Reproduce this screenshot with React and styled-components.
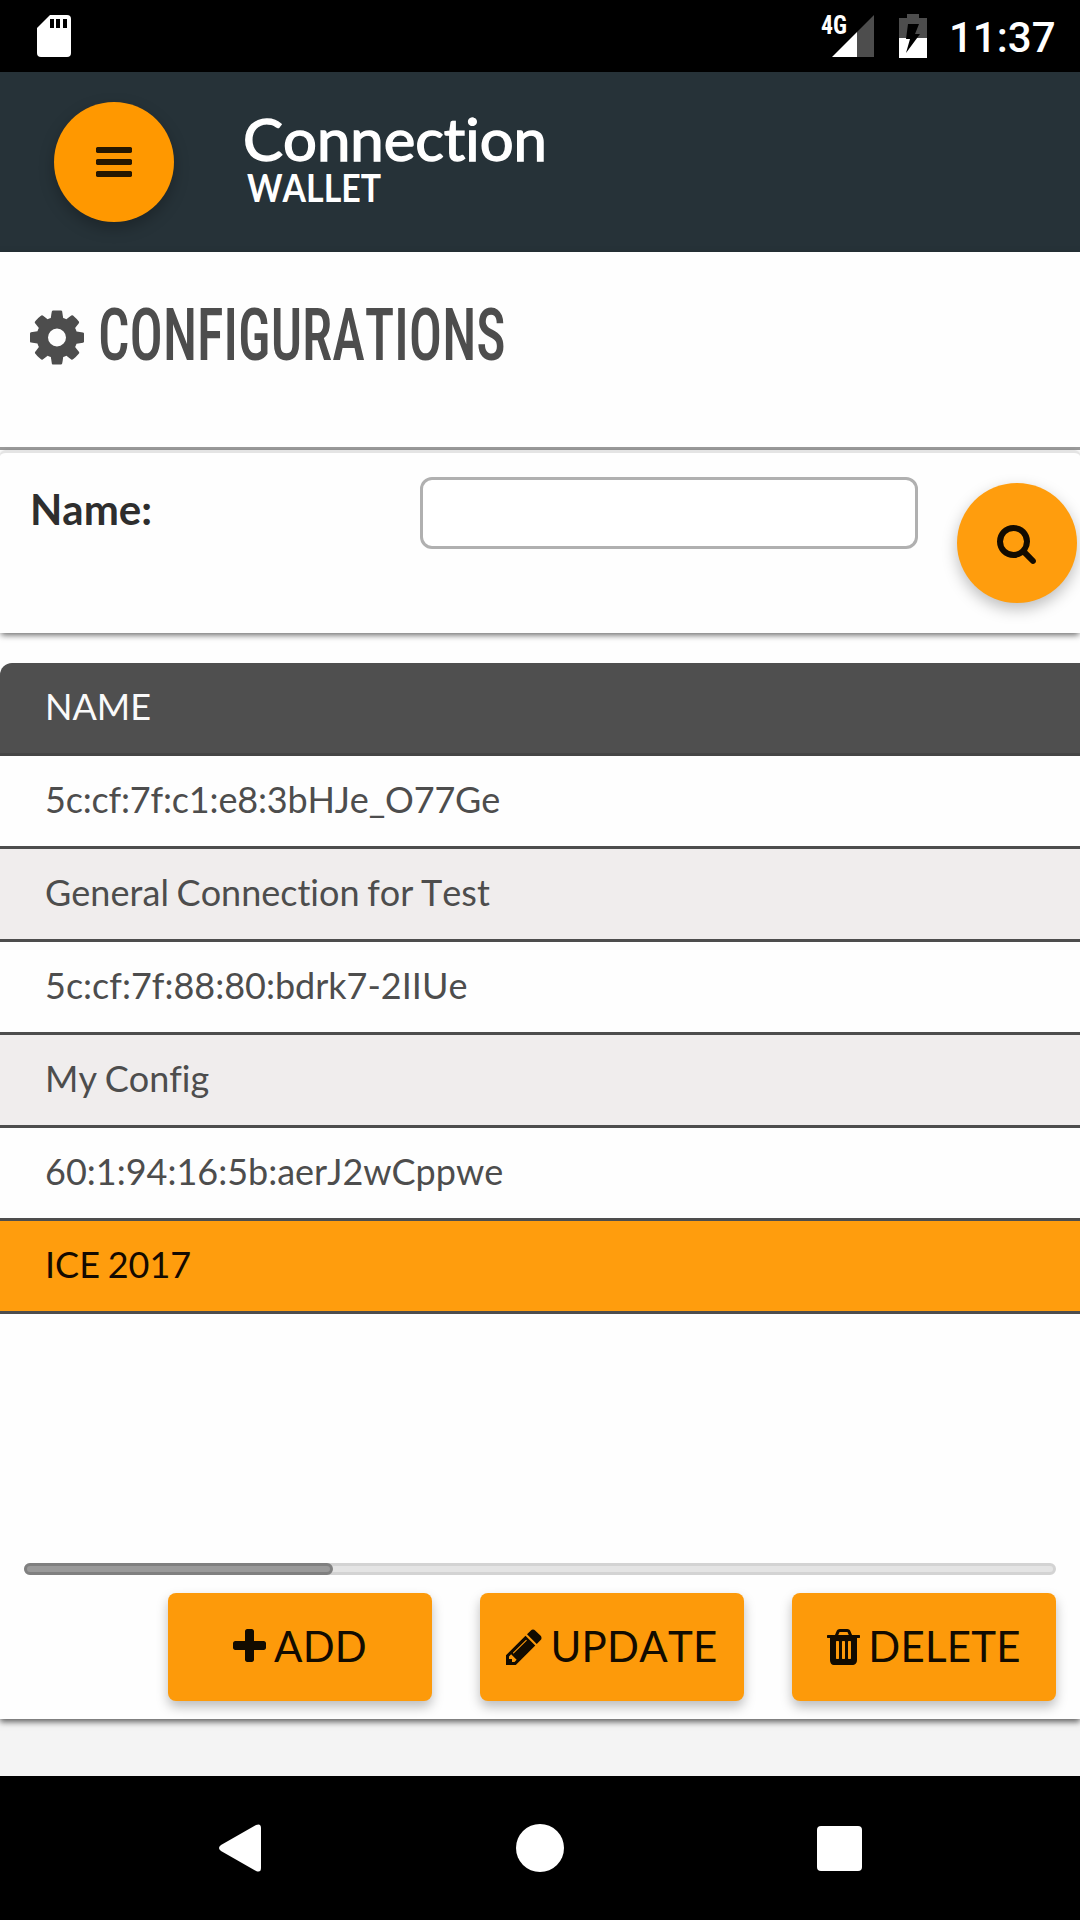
import styled, { createGlobalStyle } from 'styled-components';
import { useState } from 'react';

const GlobalStyle = createGlobalStyle`
    * {
        box-sizing: border-box;
    }

    body {
        margin: 0;
        background: #f4f4f4;
        font-family: Lato, 'Noto Sans', sans-serif;
        font-kerning: none;
        font-variant-ligatures: none;
        color: #4d4d4d;
    }
`

const Screen = styled.div`
    display: flex;
    flex-direction: column;
    width: 1080px;
    height: 1920px;
    overflow: hidden;
`

const StatusBar = styled.div`
    display: flex;
    align-items: center;
    justify-content: space-between;
    height: 72px;
    flex: none;
    padding: 0 25px 0 37px;
    background: #000;
`

const StatusIcons = styled.div`
    display: flex;
    align-items: center;
`

const Network = styled.svg`
    width: 54px;
    height: 44px;
    margin-right: 25px;
    overflow: visible;
    font-family: 'Roboto Condensed', Roboto, sans-serif;
    font-weight: 700;
`

const Clock = styled.div`
    width: 106px;
    margin-left: 22px;
    padding-top: 4px;
    font-family: Roboto, sans-serif;
    font-size: 42px;
    font-weight: 500;
    line-height: 68px;
    text-align: right;
    white-space: nowrap;
    color: #fff;
`

const Header = styled.header`
    display: flex;
    align-items: center;
    height: 180px;
    flex: none;
    padding-left: 54px;
    background: #263238;
`

const RoundButton = styled.button`
    display: flex;
    align-items: center;
    justify-content: center;
    width: 120px;
    height: 120px;
    flex: none;
    padding: 0;
    border: none;
    border-radius: 50%;
    background: ${({ $bright }) => ($bright ? '#ff9800' : '#ff9d0d')};
    color: ${({ $bright }) => ($bright ? '#261700' : '#120b00')};
    box-shadow: 0 6px 15px rgba(0, 0, 0, 0.26);
`

const Logo = styled.svg`
    width: 304px;
    height: 100px;
    margin-left: 70px;
    overflow: visible;
    fill: #fff;
`

const LogoName = styled.text`
    font-size: 59px;
    font-weight: 400;
    stroke: #fff;
    stroke-width: 1.4px;
`

const LogoSub = styled.text`
    font-size: 37.5px;
    font-weight: 700;
`

const Content = styled.main`
    display: flex;
    flex-direction: column;
    height: 1467px;
    flex: none;
    background: #fefefe;
    box-shadow: 0 3px 6px rgba(0, 0, 0, 0.6);
`

const TitleRow = styled.div`
    display: flex;
    align-items: flex-start;
    height: 198px;
    flex: none;
    padding: 48px 0 0 30px;
    border-bottom: 3px solid #9b9b9b;
`

const GearBox = styled.div`
    width: 54px;
    height: 63px;
    margin-top: 6px;
`

const Title = styled.h1`
    margin: 0 0 0 14px;
    font-family: 'Roboto Condensed', Roboto, sans-serif;
    font-size: 72px;
    font-weight: 500;
    line-height: 72px;
    white-space: nowrap;
    transform: scaleX(0.77);
    transform-origin: left center;
`

const SearchPanel = styled.section`
    display: flex;
    align-items: flex-start;
    height: 183px;
    flex: none;
    padding: 0 3px 0 30px;
    border-top: 3px solid #e4e4e4;
    border-radius: 6px 6px 0 0;
    background: #fefefe;
    box-shadow: 0 3px 6px -1px rgba(0, 0, 0, 0.6);
`

const Label = styled.label`
    width: 390px;
    margin-top: 31px;
    font-size: 42px;
    font-weight: 700;
    line-height: 50px;
    color: #2e2e2e;
`

const NameInput = styled.input`
    width: 498px;
    height: 72px;
    margin: 24px 39px 0 0;
    padding: 0 15px;
    border: 3px solid #b0b0b0;
    border-radius: 12px;
    outline: none;
    background: #fff;
    font: inherit;
    font-size: 36px;
`

const SearchButton = styled(RoundButton)`
    margin-top: 30px;
    padding-right: 2px;
`

const Table = styled.div`
    margin-top: 30px;
    border-radius: 12px 0 0 0;
    overflow: hidden;
`

const Row = styled.div`
    height: 93px;
    padding: 21px 45px 0;
    border-bottom: 3px solid #4d4d4d;
    background: ${({ $selected, $even }) => ($selected ? '#ff9d0d' : $even ? '#f0eded' : '#fefefe')};
    color: ${({ $selected }) => ($selected ? '#140a00' : '#4d4d4d')};
    font-size: 36px;
    line-height: 44px;
    letter-spacing: ${({ $tight }) => ($tight ? '-0.17px' : 'normal')};
    word-spacing: -1.5px;
`

const HeadRow = styled(Row)`
    border-bottom-color: #454545;
    background: #4f4f4f;
    color: #fafafa;
`

const Footer = styled.div`
    display: flex;
    flex-direction: column;
    align-items: flex-end;
    margin-top: auto;
    padding: 0 24px 18px;
`

const ScrollTrack = styled.div`
    align-self: stretch;
    height: 12px;
    margin-bottom: 18px;
    border-radius: 6px;
    border: 3px solid #d3d3d3;
    background: #e4e4e4;
`

const ScrollThumb = styled.div`
    width: 309px;
    height: 12px;
    margin: -3px;
    border: 3px solid #808080;
    border-radius: 6px;
    background: #9a9a9a;
`

const Actions = styled.div`
    display: flex;
    gap: 48px;
`

const ActionButton = styled.button`
    display: flex;
    align-items: center;
    justify-content: center;
    gap: 8px;
    width: 264px;
    height: 108px;
    padding: 0;
    border: none;
    border-radius: 8px;
    background: #fd9a0a;
    box-shadow: 0 6px 12px rgba(0, 0, 0, 0.26);
    font-family: inherit;
    font-kerning: none;
    font-size: 42px;
    line-height: 50px;
    letter-spacing: 0.25px;
    color: #120b00;
`

const ActionText = styled.span`
    padding-bottom: 2px;
`

const NavBar = styled.nav`
    display: flex;
    align-items: center;
    justify-content: space-between;
    height: 144px;
    flex: none;
    margin-top: auto;
    padding: 0 218px 0 219px;
    background: #000;
    fill: #fff;
`

// [left edge, width, path] on a 1792 unit grid
const ICONS = {
    bars: [128, 1536, 'M1664 1344v128q0 26-19 45t-45 19h-1408q-26 0-45-19t-19-45v-128q0-26 19-45t45-19h1408q26 0 45 19t19 45zm0-512v128q0 26-19 45t-45 19h-1408q-26 0-45-19t-19-45v-128q0-26 19-45t45-19h1408q26 0 45 19t19 45zm0-512v128q0 26-19 45t-45 19h-1408q-26 0-45-19t-19-45v-128q0-26 19-45t45-19h1408q26 0 45 19t19 45z'],
    cog: [128, 1536, 'M1152 896q0-106-75-181t-181-75-181 75-75 181 75 181 181 75 181-75 75-181zm512-109v222q0 12-8 23t-20 13l-185 28q-19 54-39 91 35 50 107 138 10 12 10 25t-9 23q-27 37-99 108t-94 71q-12 0-26-9l-138-108q-44 23-91 38-16 136-29 186-7 28-36 28h-222q-14 0-24.5-8.5t-11.5-21.5l-28-184q-49-16-90-37l-141 107q-10 9-25 9-14 0-25-11-126-114-165-168-7-10-7-23 0-12 8-23 15-21 51-66.5t54-70.5q-27-50-41-99l-183-27q-13-2-21-12.5t-8-23.5v-222q0-12 8-23t19-13l186-28q14-46 39-92-40-57-107-138-10-12-10-24 0-10 9-23 26-36 98.5-107.5t94.5-71.5q13 0 26 10l138 107q44-23 91-38 16-136 29-186 7-28 36-28h222q14 0 24.5 8.5t11.5 21.5l28 184q49 16 90 37l142-107q9-9 24-9 13 0 25 10 129 119 165 170 7 8 7 22 0 12-8 23-15 21-51 66.5t-54 70.5q26 50 41 98l183 28q13 2 21 12.5t8 23.5z'],
    search: [64, 1664, 'M1216 832q0-185-131.5-316.5t-316.5-131.5-316.5 131.5-131.5 316.5 131.5 316.5 316.5 131.5 316.5-131.5 131.5-316.5zm512 832q0 52-38 90t-90 38q-54 0-90-38l-343-342q-179 124-399 124-143 0-273.5-55.5t-225-150-150-225-55.5-273.5 55.5-273.5 150-225 225-150 273.5-55.5 273.5 55.5 225 150 150 225 55.5 273.5q0 220-124 399l343 343q37 37 37 90z'],
    plus: [192, 1408, 'M1600 736v192q0 40-28 68t-68 28h-416v416q0 40-28 68t-68 28h-192q-40 0-68-28t-28-68v-416h-416q-40 0-68-28t-28-68v-192q0-40 28-68t68-28h416v-416q0-40 28-68t68-28h192q40 0 68 28t28 68v416h416q40 0 68 28t28 68z'],
    pencil: [128, 1536, 'M491 1536l91-91-235-235-91 91v107h128v128h107zm523-928q0-22-22-22-10 0-17 7l-542 542q-7 7-7 17 0 22 22 22 10 0 17-7l542-542q7-7 7-17zm-54-192l416 416-832 832h-416v-416zm683 96q0 53-37 90l-166 166-416-416 166-165q36-38 90-38 53 0 91 38l235 234q37 39 37 91z'],
    trash: [192, 1408, 'M704 1376v-704q0-14-9-23t-23-9h-64q-14 0-23 9t-9 23v704q0 14 9 23t23 9h64q14 0 23-9t9-23zm256 0v-704q0-14-9-23t-23-9h-64q-14 0-23 9t-9 23v704q0 14 9 23t23 9h64q14 0 23-9t9-23zm256 0v-704q0-14-9-23t-23-9h-64q-14 0-23 9t-9 23v704q0 14 9 23t23 9h64q14 0 23-9t9-23zm-544-992h448l-48-117q-7-9-17-11h-317q-10 2-17 11zm928 32v64q0 14-9 23t-23 9h-96v948q0 83-47 143.5t-113 60.5h-832q-66 0-113-58.5t-47-141.5v-952h-96q-14 0-23-9t-9-23v-64q0-14 9-23t23-9h309l70-167q15-37 54-63t79-26h320q40 0 79 26t54 63l70 167h309q14 0 23 9t9 23z'],
}

const Icon = ({ name, size = 42 }) => {
    const [left, width, path] = ICONS[name]

    return (
        <svg width={width * size / 1792} height={size} viewBox={`${left} 0 ${width} 1792`} fill='currentColor'>
            <path d={path} />
        </svg>
    )
}

const CONFIGS = [
    '5c:cf:7f:c1:e8:3bHJe_O77Ge',
    'General Connection for Test',
    '5c:cf:7f:88:80:bdrk7-2IIUe',
    'My Config',
    '60:1:94:16:5b:aerJ2wCppwe',
    'ICE 2017',
]

const ACTIONS = [
    { icon: 'plus', text: 'ADD' },
    { icon: 'pencil', text: 'UPDATE' },
    { icon: 'trash', text: 'DELETE' },
]

const App = () => {
    const [name, setName] = useState('')
    const [selected, setSelected] = useState('ICE 2017')

    return (
        <Screen>
            <GlobalStyle />
            <StatusBar>
                <svg width='34' height='42' viewBox='0 0 34 42'>
                    <path d='M13 0H30Q34 0 34 4V38Q34 42 30 42H4Q0 42 0 38V13Z' fill='#fff' />
                    <path d='M13 4h4v9h-4zM19 4h4v9h-4zM26 4h4v9h-4z' fill='#000' />
                </svg>
                <StatusIcons>
                    <Network viewBox='0 0 54 44'>
                        <path d='M54 1V43H37V18Z' fill='#4d4d4d' />
                        <path d='M37 18V43H12Z' fill='#fff' />
                        <text x='1' y='20' fontSize='26' fill='#fff' textLength='26' lengthAdjust='spacingAndGlyphs'>4G</text>
                    </Network>
                    <svg width='28' height='44' viewBox='0 0 28 44'>
                        <path d='M8 0H20V4H28V24H0V4H8Z' fill='#4d4d4d' />
                        <path d='M0 24H28V44H0Z' fill='#fff' />
                        <path d='M9 10H20L16 20H21L7 39L11 25H7Z' fill='#000' />
                    </svg>
                    <Clock>11:37</Clock>
                </StatusIcons>
            </StatusBar>
            <Header>
                <RoundButton $bright>
                    <Icon name='bars' />
                </RoundButton>
                <Logo viewBox='0 0 304 100'>
                    <LogoName x='-1' y='49' textLength='304' lengthAdjust='spacingAndGlyphs'>Connection</LogoName>
                    <LogoSub x='3' y='90' textLength='134' lengthAdjust='spacingAndGlyphs'>WALLET</LogoSub>
                </Logo>
            </Header>
            <Content>
                <TitleRow>
                    <GearBox>
                        <Icon name='cog' size={63} />
                    </GearBox>
                    <Title>CONFIGURATIONS</Title>
                </TitleRow>
                <SearchPanel>
                    <Label htmlFor='name'>Name:</Label>
                    <NameInput id='name' value={name} onChange={e => setName(e.target.value)} />
                    <SearchButton>
                        <Icon name='search' />
                    </SearchButton>
                </SearchPanel>
                <Table>
                    <HeadRow>NAME</HeadRow>
                    {CONFIGS.map((config, i) => (
                        <Row
                            key={config}
                            $even={i % 2 === 1}
                            $selected={config === selected}
                            $tight={config.includes('_')}
                            onClick={() => setSelected(config)}
                        >
                            {config}
                        </Row>
                    ))}
                </Table>
                <Footer>
                    <ScrollTrack>
                        <ScrollThumb />
                    </ScrollTrack>
                    <Actions>
                        {ACTIONS.map(({ icon, text }) => (
                            <ActionButton key={icon}>
                                <Icon name={icon} />
                                <ActionText>{text}</ActionText>
                            </ActionButton>
                        ))}
                    </Actions>
                </Footer>
            </Content>
            <NavBar>
                <svg width='44' height='48' viewBox='0 0 44 48'>
                    <path d='M2 21L37 1Q42 -1 42 4V44Q42 49 37 47L2 27Q-2 24 2 21Z' />
                </svg>
                <svg width='48' height='48' viewBox='0 0 48 48'>
                    <circle cx='24' cy='24' r='24' />
                </svg>
                <svg width='45' height='45' viewBox='0 0 45 45'>
                    <rect width='45' height='45' rx='4' />
                </svg>
            </NavBar>
        </Screen>
    )
}

export default App
